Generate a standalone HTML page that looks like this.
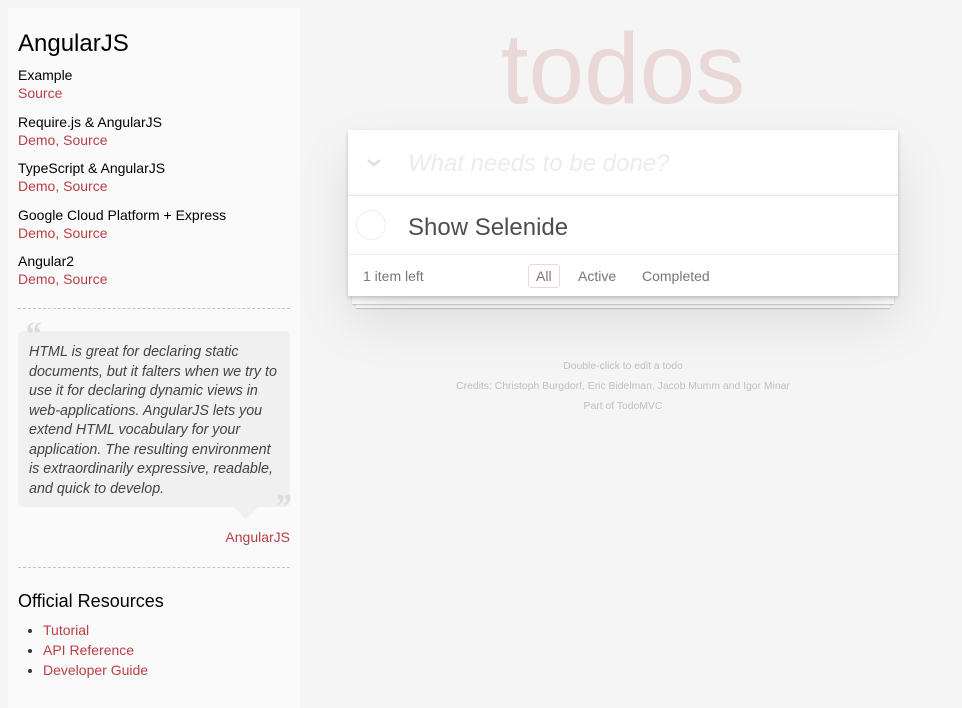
<!DOCTYPE html>
<html><head><style>
*{box-sizing:border-box;margin:0;padding:0}
body{width:962px;height:683px;overflow:hidden;background:#f5f5f5;font-family:"Liberation Sans",Arial,sans-serif;position:relative}
a{color:#b83f45;text-decoration:none}
aside{position:absolute;left:8px;top:8px;width:292px;height:700px;background:#fafafa;padding:0 10px}
aside h3{font-size:24px;font-weight:normal;color:#000;margin-top:22px;line-height:28px}
aside h4{font-size:14px;font-weight:normal;color:#000;line-height:18px}
.ex{font-size:14px;line-height:18px;margin-bottom:10.5px}
.ex:first-of-type{margin-top:8px}
hr{border:0;border-top:1px dashed #c5c5c5;margin:0}
.q{position:absolute;left:18px;top:331px;width:272px;height:176px;background:#f0f0f0;border-radius:5px;padding:10px 8px 10px 11px;font-style:italic;font-size:14.3px;line-height:19.5px;color:#444}
.q:after{content:"";position:absolute;left:216px;bottom:-12px;border:12px solid transparent;border-top-color:#f0f0f0;border-bottom:0}
.lq{position:absolute;left:24px;top:316px;font:bold 34px "Liberation Serif",serif;color:#ddd;font-style:italic}
.rq{position:absolute;left:274px;top:488px;font:bold 34px "Liberation Serif",serif;color:#ddd;font-style:italic}
.app{position:absolute;left:348px;top:130px;width:550px;background:#fff;box-shadow:0 2px 4px rgba(0,0,0,.2),0 25px 50px rgba(0,0,0,.1)}
h1{position:absolute;left:348px;width:550px;top:14px;text-align:center;font-size:100px;font-weight:100;color:rgba(175,47,47,.15);line-height:110px}
.new{height:66px;border-bottom:1px solid #e6e6e6;position:relative;box-shadow:inset 0 -2px 1px rgba(0,0,0,.03)}
.new span{position:absolute;left:60px;top:20px;font-size:24px;font-style:italic;color:#ececec;font-weight:300}
.item{height:59px;border-bottom:1px solid #ededed;position:relative}
.item .c{position:absolute;left:8px;top:14px;width:30px;height:30px;border:1px solid #ededed;border-radius:50%}
.item span{position:absolute;left:60px;top:18px;font-size:24px;color:#4d4d4d}
.ft{height:41px;position:relative;font-size:14px;color:#777}
.ft .l{position:absolute;left:15px;top:13px}
.ft .f{position:absolute;top:9px;padding:3px 7px;border:1px solid transparent;border-radius:3px}
.stk1,.stk2{position:absolute;background:#fff;box-shadow:0 1px 1px rgba(0,0,0,.2)}
.info{position:absolute;left:348px;width:550px;text-align:center;font-size:10.4px;color:#bfbfbf;line-height:20px;top:357px}
ul{margin-left:25px;margin-top:8px;font-size:14px;line-height:20px}
li::marker{color:#333}
.chev{position:absolute;left:14px;top:20px;width:24px;height:24px}
</style></head><body>
<aside>
<h3>AngularJS</h3>
<div class="ex"><h4>Example</h4><a>Source</a></div>
<div class="ex"><h4>Require.js &amp; AngularJS</h4><a>Demo, Source</a></div>
<div class="ex"><h4>TypeScript &amp; AngularJS</h4><a>Demo, Source</a></div>
<div class="ex"><h4>Google Cloud Platform + Express</h4><a>Demo, Source</a></div>
<div class="ex" style="margin-bottom:20px"><h4>Angular2</h4><a>Demo, Source</a></div>
<hr>
<div style="height:252px"></div>
<div style="text-align:right;font-size:14px;margin-top:-32px;margin-bottom:22px"><a>AngularJS</a></div>
<hr>
<h3 style="font-size:18px;margin-top:22px;line-height:22px">Official Resources</h3>
<ul><li><a>Tutorial</a></li><li><a>API Reference</a></li><li><a>Developer Guide</a></li></ul>
</aside>
<div class="q" style="padding-top:12px">HTML is great for declaring static documents, but it falters when we try to use it for declaring dynamic views in web-applications. AngularJS lets you extend HTML vocabulary for your application. The resulting environment is extraordinarily expressive, readable, and quick to develop.</div>
<div class="lq">“</div><div class="rq">”</div>
<h1>todos</h1>
<div class="stk2" style="left:356px;top:300px;width:534px;height:8px"></div>
<div class="stk1" style="left:352px;top:296px;width:542px;height:8px"></div>
<div class="app">
<div class="new"><svg class="chev" viewBox="0 0 24 24"><path d="M6 10 L12 15 L18 10" fill="none" stroke="#e0e0e0" stroke-width="2.5"/></svg><span>What needs to be done?</span></div>
<div class="item"><div class="c"></div><span>Show Selenide</span></div>
<div class="ft"><span class="l">1 item left</span>
<span class="f" style="left:180px;border-color:rgba(175,47,47,.2)">All</span>
<span class="f" style="left:222px">Active</span>
<span class="f" style="left:286px">Completed</span></div>
</div>
<div class="info">Double-click to edit a todo<br>Credits: Christoph Burgdorf, Eric Bidelman, Jacob Mumm and Igor Minar<br>Part of TodoMVC</div>
</body></html>
